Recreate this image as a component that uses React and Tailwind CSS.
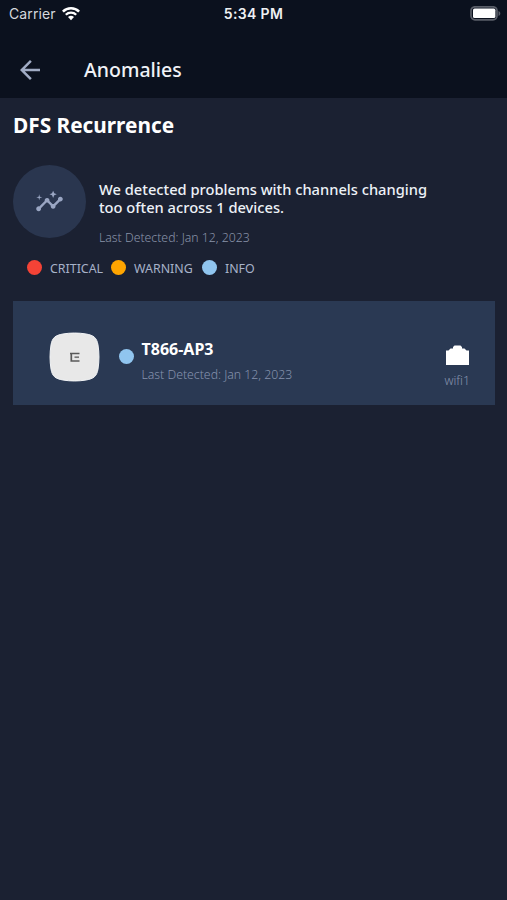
import { MdArrowBack, MdInsights } from "react-icons/md";

function WifiIcon() {
  return (
    <svg className="ml-[6px] h-[14px] w-[18px]" viewBox="0 0 18 14" fill="none" stroke="#fff">
      <path d="M0.9 4.6a11.6 11.6 0 0 1 16.2 0" strokeWidth="2.6" />
      <path d="M3.8 7.7a7.4 7.4 0 0 1 10.4 0" strokeWidth="2.3" />
      <path d="M6 10.1a4.3 4.3 0 0 1 6 0L9 13.2z" fill="#fff" stroke="none" />
    </svg>
  );
}

function BatteryIcon() {
  return (
    <svg className="h-[15px] w-[31px]" viewBox="0 0 31 15">
      <rect x="1" y="0.800" width="26" height="13" rx="4" fill="none" stroke="#5a5e68" strokeWidth="1.700" />
      <rect x="3" y="2.600" width="22.400" height="9.500" rx="1.600" fill="#fff" />
      <path d="M28.500 5c2.400.8 2.400 4.200 0 5z" fill="#5a5e68" />
    </svg>
  );
}

function AccessPoint() {
  return (
    <svg className="h-[50px] w-[51px] shrink-0" viewBox="0 0 51 50">
      <path
        d="M14 2C21 .7 30 .7 37 2 45 3.300 47.800 6 49 13c1.300 8 1.300 16 0 24-1.200 7-4 9.700-12 11-7 1.300-16 1.300-23 0C6 46.700 3.200 44 2 37c-1.300-8-1.300-16 0-24C3.200 6 6 3.300 14 2z"
        fill="#e8e8e8" stroke="#f3f5f7" strokeWidth="1"
      />
      <path d="M21 21.500h9.500M22.300 21.500v7.500h8.200" fill="none" stroke="#595959" strokeWidth="1.700" />
      <path d="M25.500 25.200h4.500" fill="none" stroke="#777" strokeWidth="1.700" />
    </svg>
  );
}

function PortIcon() {
  return (
    <svg className="h-5 w-[23px]" viewBox="0 0 23 20" fill="#fff">
      <path d="M0 20V5.500h2.500L4.500 3.500h2.500V2L8.500 0.500h6L16 2v1.500h2.500L20.500 5.500H23V20z" />
    </svg>
  );
}

function Legend({ color, label, className }) {
  return (
    <div className={"flex items-center " + className}>
      <span className={"size-[15px] shrink-0 rounded-full " + color} />
      <span className="ml-2 pt-[2px] whitespace-nowrap text-[12.400px] leading-4">{label}</span>
    </div>
  );
}

export default function App() {
  return (
    <div className="h-[900px] w-[507px] overflow-hidden bg-[#1b2132] font-['Noto_Sans',sans-serif] text-white">
      <header className="h-[98px] bg-[#0b111e]">
        <div className="grid h-[27px] grid-cols-3 items-center font-['Inter',sans-serif] text-[14px]">
          <div className="flex items-center pl-[9px] text-[#d5d8dd]">
            <span className="tracking-[0.1px]">Carrier</span>
            <WifiIcon />
          </div>
          <span className="text-center text-[14px] font-semibold tracking-[0.35px] text-[#eef0f3]">5:34 PM</span>
          <div className="flex justify-end pr-[6px]"><BatteryIcon /></div>
        </div>
        <div className="flex h-[85px] items-center pl-[15px]">
          <MdArrowBack className="size-[30px] text-[#a1acc5]" />
          <h1 className="ml-[39px] text-[19.500px] font-medium text-[#f0f2f6]">Anomalies</h1>
        </div>
      </header>

      <main className="px-[13px] pt-[12px]">
        <h2 className="text-[20.800px] leading-[30px] font-bold">DFS Recurrence</h2>
        <section className="mt-[25px] flex">
          <div className="flex size-[73px] shrink-0 items-center justify-center rounded-full bg-[#2a364f]">
            <MdInsights className="size-[29px] text-[#9aa6c3]" />
          </div>
          <div className="pt-4 pl-[13px]">
            <p className="text-[14.680px] leading-[17.500px] font-medium text-[#edf1f7]">
              We detected problems with channels changing<br />too often across 1 devices.
            </p>
            <p className="mt-[13px] text-[12.250px] leading-[18px] font-light text-[#8993a9]">Last Detected: Jan 12, 2023</p>
          </div>
        </section>
        <div className="mt-[12px] flex h-[17px] pl-[14px] text-[#a7b2c9]">
          <Legend color="bg-[#f44336]" label="CRITICAL" className="w-[84px]" />
          <Legend color="bg-[#ffa500]" label="WARNING" className="w-[91px]" />
          <Legend color="bg-[#90c5ef]" label="INFO" className="" />
        </div>
        <article className="mt-[25px] flex h-[104px] w-[482px] items-center bg-[#2a3953] pl-[35.500px]">
          <div className="pt-[7px]"><AccessPoint /></div>
          <span className="mt-[7px] ml-[19px] size-[15px] rounded-full bg-[#90c5ef]" />
          <div className="ml-2 pt-[15px]">
            <h3 className="text-[16px] leading-[22px] font-bold">T866-AP3</h3>
            <p className="mt-[6px] text-[12.250px] leading-[18px] font-light text-[#8592ad]">Last Detected: Jan 12, 2023</p>
          </div>
          <div className="mt-[28px] mr-[25px] ml-auto flex flex-col items-center">
            <PortIcon />
            <span className="mt-[7px] text-[12.250px] leading-[18px] font-light text-[#8592ad]">wifi1</span>
          </div>
        </article>
      </main>
    </div>
  );
}
